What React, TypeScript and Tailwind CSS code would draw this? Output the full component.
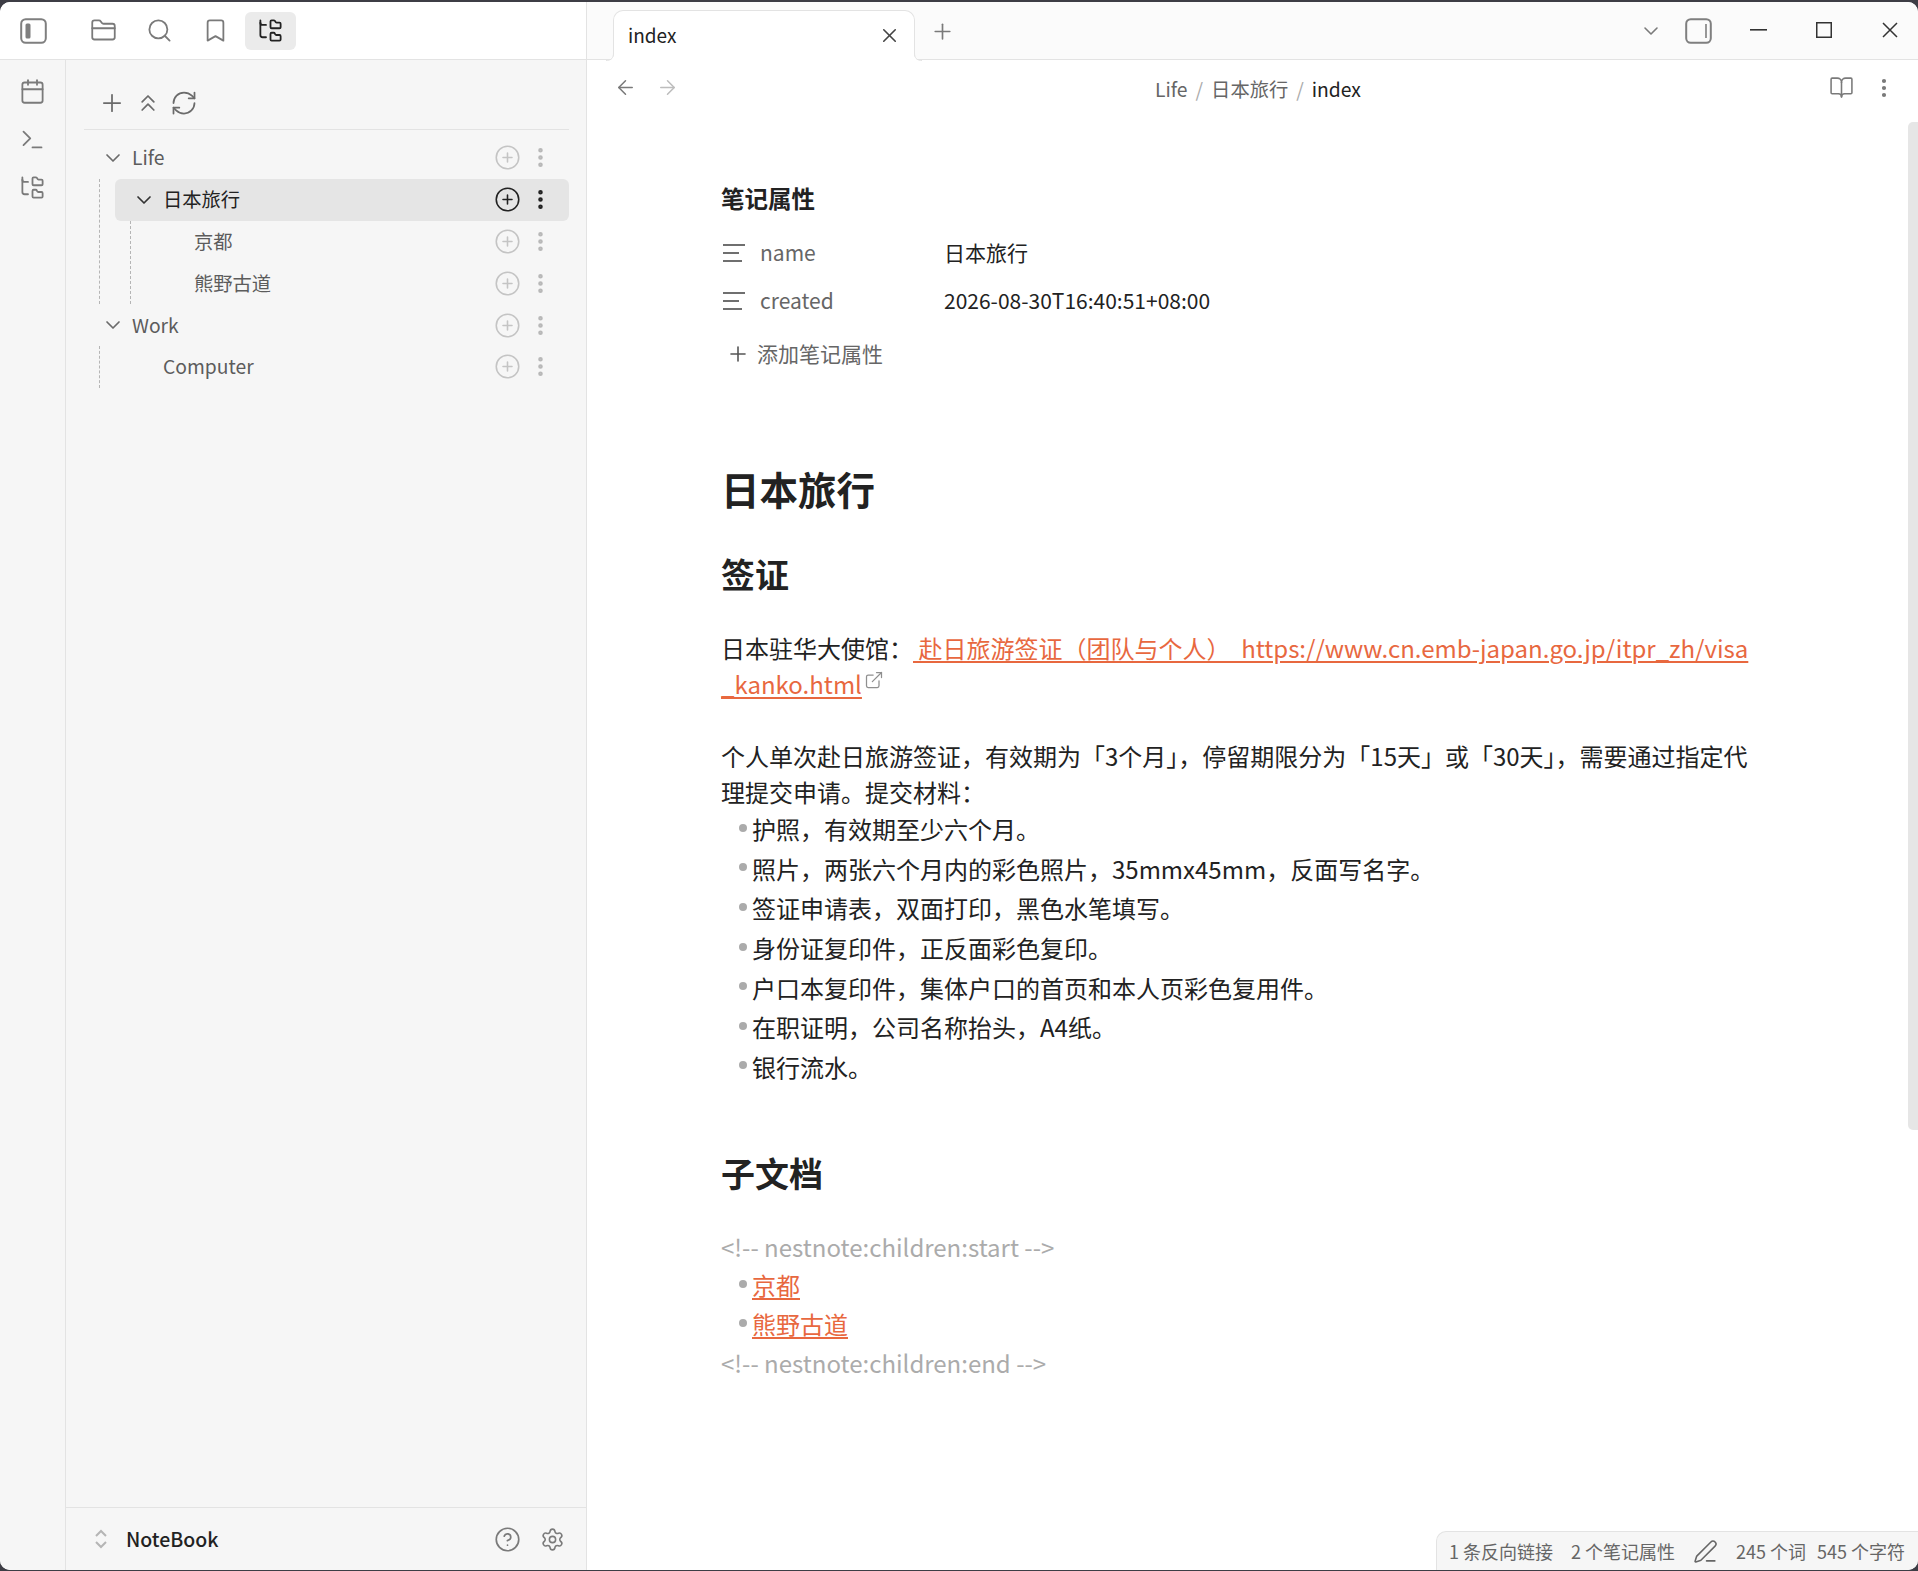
import React from "react";
import {
  ArrowLeft, ArrowRight, Bookmark, BookOpen, Calendar, ChevronDown, ChevronsUp, CircleHelp, CirclePlus,
  EllipsisVertical, ExternalLink, FolderClosed, FolderTree, PenLine, Plus, RefreshCw, Search, Settings, Terminal, X,
} from "lucide-react";

function SidebarToggle({ side }: { side: "left" | "right" }) {
  return (
    <svg width="27" height="26" viewBox="0 0 27 26" fill="none" stroke="#7f7f7f" strokeWidth="2">
      <rect x="1.2" y="1.2" width="24.6" height="23.6" rx="4.5" />
      {side === "left" ? (
        <rect x="5.5" y="5.5" width="5" height="15" rx="1.5" fill="#7f7f7f" stroke="none" />
      ) : (
        <line x1="21" y1="6" x2="21" y2="20" strokeWidth="1.6" />
      )}
    </svg>
  );
}

function PropIcon() {
  return (
    <svg width="24" height="20" viewBox="0 0 24 20" fill="none" stroke="#6f6f6f" strokeWidth="2">
      <line x1="1" y1="2" x2="23" y2="2" />
      <line x1="1" y1="10" x2="17" y2="10" />
      <line x1="1" y1="18" x2="20" y2="18" />
    </svg>
  );
}

function UpDown() {
  return (
    <svg width="20" height="24" viewBox="0 0 20 24" fill="none" stroke="#b5b5b5" strokeWidth="2">
      <path d="M5 9l5-5 5 5" />
      <path d="M5 15l5 5 5-5" />
    </svg>
  );
}

function TabFoot({ flip }: { flip?: boolean }) {
  return (
    <svg className={`absolute -bottom-px ${flip ? "-right-[8px] -scale-x-100" : "-left-[8px]"}`} width="8" height="8" viewBox="0 0 8 8" fill="none">
      <path d="M8 0V8H0C4 8 8 6 8 0Z" fill="#ffffff" />
      <path d="M7.5 0C7.5 5 5 7.5 0 7.5" stroke="#e3e3e3" />
    </svg>
  );
}

function Row({ label, active, chevron }: { label: string; active?: boolean; chevron?: boolean }) {
  return (
    <div className={`flex h-[41.8px] items-center rounded-[6px] pl-[17px] pr-[16px] ${active ? "bg-[#e5e5e5] text-[#222222]" : "text-[#5c5c5c]"}`}>
      <span className="flex w-[31px] shrink-0 items-center">
        {chevron && <ChevronDown size={24} strokeWidth={1.7} color={active ? "#333333" : "#6b6b6b"} />}
      </span>
      <span className="flex-1 truncate text-[19.3px]">{label}</span>
      <CirclePlus size={27} strokeWidth={1.4} color={active ? "#222222" : "#c4c4c4"} />
      <span className="ml-[7px]">
        <EllipsisVertical size={25} strokeWidth={2.4} color={active ? "#222222" : "#b8b8b8"} />
      </span>
    </div>
  );
}

function Children({ children }: { children: React.ReactNode }) {
  return <div className="ml-[15px] border-l border-dashed border-[#b5b5b5] pl-[15px]">{children}</div>;
}

function Prop({ name, value }: { name: string; value: string }) {
  return (
    <div className="flex h-[48px] items-center text-[21px]">
      <span className="ml-[1px] flex w-[38px] shrink-0"><PropIcon /></span>
      <span className="w-[184px] shrink-0 text-[#666666]">{name}</span>
      <span className="text-[#222222]">{value}</span>
    </div>
  );
}

function Li({ children }: { children: React.ReactNode }) {
  return (
    <li className="flex h-[39.6px] items-center pl-[18px]">
      <span className="mr-[5px] -mt-[3px] size-[8px] shrink-0 rounded-full bg-[#ababab]" />
      <span>{children}</span>
    </li>
  );
}

const linkCls = "text-[#e8683f] underline decoration-2 underline-offset-[3px]";

export default function App() {
  return (
    <div className="h-[1571px] w-[1918px] overflow-hidden bg-[#3d3d45] pb-px pt-[2px] font-['Noto_Sans_CJK_SC','Noto_Sans',sans-serif]">
      <div className="flex h-full overflow-hidden rounded-[10px] bg-white">
        {/* left */}
        <div className="flex w-[587px] shrink-0 flex-col border-r border-[#e3e3e3]">
          <div className="flex h-[58px] shrink-0 items-center border-b border-[#e3e3e3] bg-white pl-[20px]">
            <SidebarToggle side="left" />
            <div className="ml-[43px] flex items-center gap-[29px]">
              <FolderClosed size={27} strokeWidth={1.6} color="#7a7a7a" />
              <Search size={27} strokeWidth={1.6} color="#7a7a7a" />
              <Bookmark size={27} strokeWidth={1.6} color="#7a7a7a" />
            </div>
            <div className="ml-[16px] flex h-[38px] w-[51px] items-center justify-center rounded-[6px] bg-[#ebebeb]">
              <FolderTree size={27} strokeWidth={1.6} color="#222222" />
            </div>
          </div>
          <div className="flex min-h-0 flex-1">
            <div className="flex w-[66px] shrink-0 flex-col items-center gap-[21px] border-r border-[#e3e3e3] bg-[#f6f6f6] pt-[18px]">
              <Calendar size={27} strokeWidth={1.6} color="#7a7a7a" />
              <Terminal size={27} strokeWidth={1.6} color="#7a7a7a" />
              <FolderTree size={27} strokeWidth={1.6} color="#7a7a7a" />
            </div>
            <div className="flex min-w-0 flex-1 flex-col bg-[#f6f6f6]">
              <div className="ml-[18px] mr-[17px] flex h-[70px] shrink-0 items-start gap-[8px] border-b border-[#e3e3e3] pl-[14px] pt-[29px]">
                <Plus size={28} strokeWidth={1.5} color="#6b6b6b" />
                <ChevronsUp size={28} strokeWidth={1.5} color="#6b6b6b" />
                <RefreshCw size={28} strokeWidth={1.5} color="#6b6b6b" />
              </div>
              <div className="ml-[18px] mr-[17px] mt-[7px]">
                <Row label="Life" chevron />
                <Children>
                  <Row label="日本旅行" chevron active />
                  <Children>
                    <Row label="京都" />
                    <Row label="熊野古道" />
                  </Children>
                </Children>
                <Row label="Work" chevron />
                <Children>
                  <Row label="Computer" />
                </Children>
              </div>
              <div className="flex-1" />
              <div className="flex h-[63px] shrink-0 items-center border-t border-[#e3e3e3] pl-[25px] pr-[21px]">
                <UpDown />
                <span className="ml-[15px] flex-1 text-[19.5px] font-medium text-[#222222]">NoteBook</span>
                <CircleHelp size={27} strokeWidth={1.5} color="#7a7a7a" />
                <span className="ml-[19px]"><Settings size={25} strokeWidth={1.5} color="#7a7a7a" /></span>
              </div>
            </div>
          </div>
        </div>

        {/* right */}
        <div className="relative flex min-w-0 flex-1 flex-col">
          <div className="flex h-[58px] shrink-0 items-end border-b border-[#e3e3e3] bg-[#fbfbfb] pl-[26px]">
            <div className="relative -mb-px flex h-[50px] w-[302px] items-center rounded-t-[10px] border border-b-0 border-[#e3e3e3] bg-white pl-[14px] pr-[13px]">
              <span className="-mt-[1px] flex-1 text-[19px] text-[#222222]">index</span>
              <X size={23} strokeWidth={1.7} color="#444444" />
              <TabFoot />
              <TabFoot flip />
            </div>
            <div className="flex h-full flex-1 items-center">
              <span className="ml-[15px] mt-[1px]"><Plus size={25} strokeWidth={1.6} color="#7a7a7a" /></span>
              <div className="flex-1" />
              <span className="mt-[1px]"><ChevronDown size={24} strokeWidth={1.6} color="#7a7a7a" /></span>
              <span className="ml-[22px]"><SidebarToggle side="right" /></span>
              <svg className="ml-[38px] -mt-[2px]" width="17" height="2" viewBox="0 0 17 2"><rect width="17" height="1.6" fill="#333333" /></svg>
              <svg className="ml-[49px] -mt-[2px]" width="16" height="16" viewBox="0 0 16 16" fill="none" stroke="#333333" strokeWidth="1.5"><rect x="0.75" y="0.75" width="14.5" height="14.5" /></svg>
              <svg className="ml-[50px] mr-[20px] -mt-[2px]" width="16" height="16" viewBox="0 0 16 16" fill="none" stroke="#333333" strokeWidth="1.5"><path d="M1 1l14 14M15 1L1 15" /></svg>
            </div>
          </div>

          <div className="flex h-[57px] shrink-0 items-center">
            <div className="-mt-[2px] flex w-[199px] items-center gap-[19px] pl-[27px]">
              <ArrowLeft size={23} strokeWidth={1.6} color="#7a7a7a" />
              <ArrowRight size={23} strokeWidth={1.6} color="#bdbdbd" />
            </div>
            <div className="mt-[1px] flex flex-1 items-center justify-center gap-[8px] text-[19.3px] text-[#666666]">
              <span>Life</span>
              <span className="text-[#ababab]">/</span>
              <span>日本旅行</span>
              <span className="text-[#ababab]">/</span>
              <span className="text-[#222222]">index</span>
            </div>
            <div className="-mt-[2px] flex w-[188px] items-center justify-end gap-[18px] pr-[22px]">
              <BookOpen size={25} strokeWidth={1.5} color="#7a7a7a" />
              <EllipsisVertical size={24} strokeWidth={2.2} color="#7a7a7a" />
            </div>
          </div>

          <div className="flex-1 overflow-hidden pl-[134px] pr-[165px] pt-[64px] text-[#222222]">
            <div className="h-[34px] text-[23.5px] font-semibold leading-[34px]">笔记属性</div>
            <div className="mt-[14px]">
              <Prop name="name" value="日本旅行" />
              <Prop name="created" value="2026-08-30T16:40:51+08:00" />
            </div>
            <div className="mt-[5px] flex h-[48px] items-center text-[21px] text-[#666666]">
              <span className="ml-[5px] mr-[7px]"><Plus size={24} strokeWidth={1.6} color="#555555" /></span>
              添加笔记属性
            </div>

            <h1 className="mt-[85px] h-[50px] text-[38.5px] font-bold leading-[50px]">日本旅行</h1>
            <h2 className="mt-[39px] h-[44px] text-[34px] font-bold leading-[44px]">签证</h2>

            <div className="mt-[33.5px] text-[24px] leading-[36px]">
              <p className="whitespace-nowrap">
                日本驻华大使馆：
                <a className={linkCls}>&nbsp;赴日旅游签证（团队与个人）&nbsp;&nbsp;https://www.cn.emb-japan.go.jp/itpr_zh/visa<br />_kanko.html</a>
                <ExternalLink className="ml-[2px] inline-block -translate-y-[7px] align-middle" size={20} strokeWidth={1.5} color="#8f8f8f" />
              </p>
              <p className="mt-[36px] w-[1030px]">
                个人单次赴日旅游签证，有效期为「3个月」，停留期限分为「15天」或「30天」，需要通过指定代理提交申请。提交材料：
              </p>
              <ul>
                <Li>护照，有效期至少六个月。</Li>
                <Li>照片，两张六个月内的彩色照片，35mmx45mm，反面写名字。</Li>
                <Li>签证申请表，双面打印，黑色水笔填写。</Li>
                <Li>身份证复印件，正反面彩色复印。</Li>
                <Li>户口本复印件，集体户口的首页和本人页彩色复用件。</Li>
                <Li>在职证明，公司名称抬头，A4纸。</Li>
                <Li>银行流水。</Li>
              </ul>
            </div>

            <h2 className="mt-[64px] h-[44px] text-[34px] font-bold leading-[44px]">子文档</h2>
            <div className="mt-[33px] text-[24px]">
              <div className="h-[38px] leading-[38px] text-[#ababab]">&lt;!-- nestnote:children:start --&gt;</div>
              <ul>
                <li className="flex h-[39px] items-center pl-[18px]">
                  <span className="mr-[5px] -mt-[3px] size-[8px] shrink-0 rounded-full bg-[#ababab]" />
                  <a className={linkCls}>京都</a>
                </li>
                <li className="flex h-[39px] items-center pl-[18px]">
                  <span className="mr-[5px] -mt-[3px] size-[8px] shrink-0 rounded-full bg-[#ababab]" />
                  <a className={linkCls}>熊野古道</a>
                </li>
              </ul>
              <div className="h-[38px] leading-[38px] text-[#ababab]">&lt;!-- nestnote:children:end --&gt;</div>
            </div>
          </div>

          {/* overlays */}
          <div className="absolute right-0 top-[120px] h-[1008px] w-[10px] rounded-l-[5px] bg-[#e6e6e6]" />
          <div className="absolute bottom-0 right-0 flex h-[39px] items-center gap-[18px] rounded-tl-[10px] border-l border-t border-[#e3e3e3] bg-[#f6f6f6] pl-[12px] pr-[13px] text-[18px] text-[#666666]">
            <span>1 条反向链接</span>
            <span>2 个笔记属性</span>
            <PenLine size={25} strokeWidth={1.5} color="#666666" />
            <span>245 个词</span>
            <span className="-ml-[7px]">545 个字符</span>
          </div>
        </div>
      </div>
    </div>
  );
}
